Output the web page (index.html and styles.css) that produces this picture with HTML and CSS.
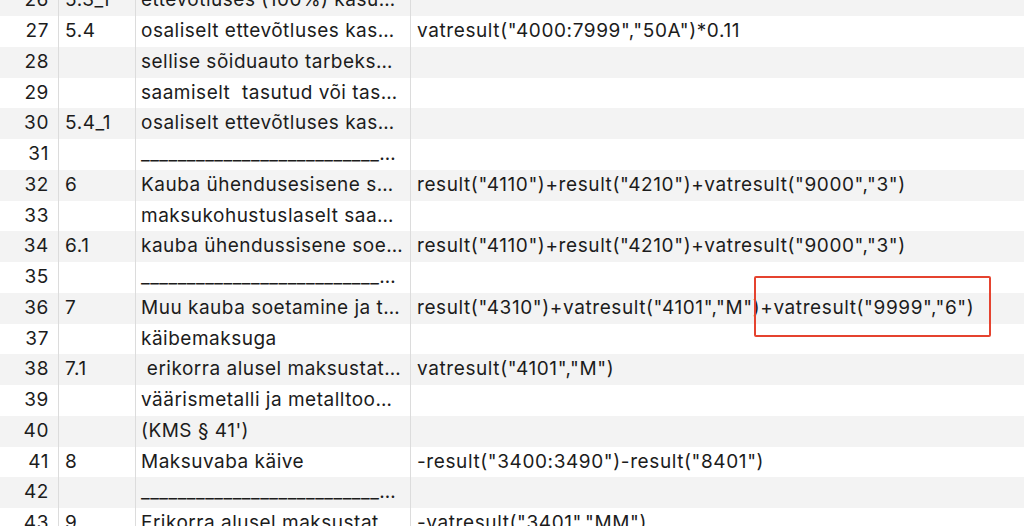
FILE: index.html
```html
<!DOCTYPE html>
<html lang="et">
<head>
    <meta charset="UTF-8">
    <meta name="viewport" content="width=device-width, initial-scale=1.0">
    <title>KMD read</title>
    <link rel="stylesheet" href="styles.css">
</head>
<body>
    <div class="sheet">
        <div class="row">
            <div class="cell num">26</div>
            <div class="cell code">5.3_1</div>
            <div class="cell name">ettevõtluses (100%) kasu…</div>
            <div class="cell formula"></div>
        </div>
        <div class="row">
            <div class="cell num">27</div>
            <div class="cell code">5.4</div>
            <div class="cell name">osaliselt ettevõtluses kas…</div>
            <div class="cell formula">vatresult("4000:7999","50A")*0.11</div>
        </div>
        <div class="row">
            <div class="cell num">28</div>
            <div class="cell code"></div>
            <div class="cell name">sellise sõiduauto tarbeks…</div>
            <div class="cell formula"></div>
        </div>
        <div class="row">
            <div class="cell num">29</div>
            <div class="cell code"></div>
            <div class="cell name">saamiselt&nbsp; tasutud või tas…</div>
            <div class="cell formula"></div>
        </div>
        <div class="row">
            <div class="cell num">30</div>
            <div class="cell code">5.4_1</div>
            <div class="cell name">osaliselt ettevõtluses kas…</div>
            <div class="cell formula"></div>
        </div>
        <div class="row">
            <div class="cell num">31</div>
            <div class="cell code"></div>
            <div class="cell name line">________________________________________________</div>
            <div class="cell formula"></div>
        </div>
        <div class="row">
            <div class="cell num">32</div>
            <div class="cell code">6</div>
            <div class="cell name">Kauba ühendusesisene s…</div>
            <div class="cell formula">result("4110")+result("4210")+vatresult("9000","3")</div>
        </div>
        <div class="row">
            <div class="cell num">33</div>
            <div class="cell code"></div>
            <div class="cell name">maksukohustuslaselt saa…</div>
            <div class="cell formula"></div>
        </div>
        <div class="row">
            <div class="cell num">34</div>
            <div class="cell code">6.1</div>
            <div class="cell name">kauba ühendussisene soe…</div>
            <div class="cell formula">result("4110")+result("4210")+vatresult("9000","3")</div>
        </div>
        <div class="row">
            <div class="cell num">35</div>
            <div class="cell code"></div>
            <div class="cell name line">________________________________________________</div>
            <div class="cell formula"></div>
        </div>
        <div class="row">
            <div class="cell num">36</div>
            <div class="cell code">7</div>
            <div class="cell name">Muu kauba soetamine ja t…</div>
            <div class="cell formula">result("4310")+vatresult("4101","M")+vatresult("9999","6")</div>
        </div>
        <div class="row">
            <div class="cell num">37</div>
            <div class="cell code"></div>
            <div class="cell name">käibemaksuga</div>
            <div class="cell formula"></div>
        </div>
        <div class="row">
            <div class="cell num">38</div>
            <div class="cell code">7.1</div>
            <div class="cell name">&nbsp;erikorra alusel maksustat…</div>
            <div class="cell formula">vatresult("4101","M")</div>
        </div>
        <div class="row">
            <div class="cell num">39</div>
            <div class="cell code"></div>
            <div class="cell name">väärismetalli ja metalltoo…</div>
            <div class="cell formula"></div>
        </div>
        <div class="row">
            <div class="cell num">40</div>
            <div class="cell code"></div>
            <div class="cell name">(KMS § 41')</div>
            <div class="cell formula"></div>
        </div>
        <div class="row">
            <div class="cell num">41</div>
            <div class="cell code">8</div>
            <div class="cell name">Maksuvaba käive</div>
            <div class="cell formula">-result("3400:3490")-result("8401")</div>
        </div>
        <div class="row">
            <div class="cell num">42</div>
            <div class="cell code"></div>
            <div class="cell name line">________________________________________________</div>
            <div class="cell formula"></div>
        </div>
        <div class="row">
            <div class="cell num">43</div>
            <div class="cell code">9</div>
            <div class="cell name">Erikorra alusel maksustat…</div>
            <div class="cell formula">-vatresult("3401","MM")</div>
        </div>

        <div class="highlight"></div>
    </div>
</body>
</html>
```

FILE: styles.css
```css
html, body {
    margin: 0;
    height: 100%;
    overflow: hidden;
    background: #fff;
}

body {
    font-family: Inter, "Liberation Sans", sans-serif;
    font-size: 19px;
    letter-spacing: 0.6px;
    color: #1c1c1c;
}

.sheet {
    position: relative;
    margin-top: -14.75px;
}

.row {
    display: grid;
    grid-template-columns: 59px 77px 275px 1fr;
    height: 30.75px;
    align-items: stretch;
}

.row:nth-child(odd) {
    background-color: #f3f3f3;
}

.cell {
    white-space: nowrap;
    overflow: hidden;
    line-height: 30.75px;
    box-sizing: border-box;
}

.num {
    text-align: right;
    padding-right: 9px;
    border-right: 1px solid #dcdcdc;
}

.code {
    padding-left: 6px;
    border-right: 1px solid #dcdcdc;
}

.name {
    padding-left: 5px;
    padding-right: 2px;
    letter-spacing: 0.5px;
    border-right: 1px solid #dcdcdc;
}

.name.line {
    padding-right: 12px;
    text-overflow: ellipsis;
}

.formula {
    padding-left: 6px;
}

.highlight {
    position: absolute;
    left: 754px;
    top: 290.75px;
    width: 237px;
    height: 61px;
    box-sizing: border-box;
    border: 2px solid #e5432f;
    border-radius: 2px;
}
```
